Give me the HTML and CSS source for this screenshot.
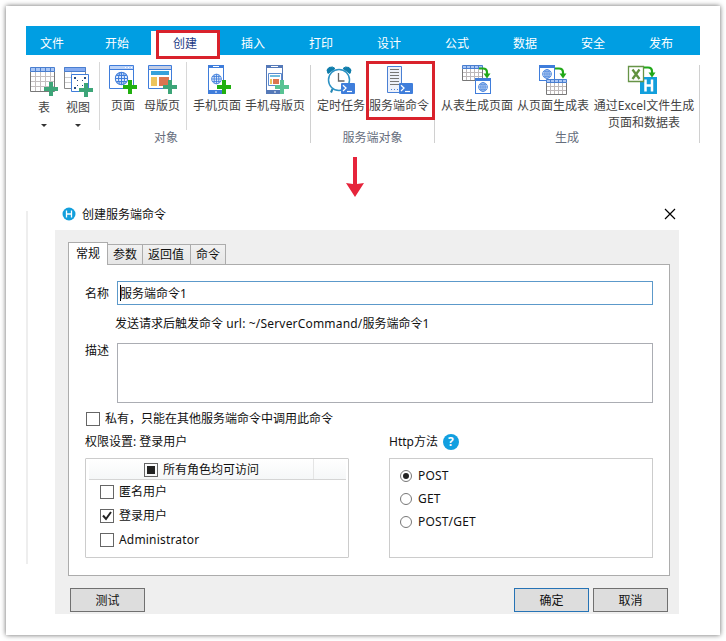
FILE: index.html
```html
<!DOCTYPE html>
<html lang="zh-CN">
<head>
<meta charset="utf-8">
<title>创建服务端命令</title>
<link rel="stylesheet" href="styles.css">
</head>
<body>
<svg class="defs" width="0" height="0">
  <defs>
    <symbol id="grid" viewBox="0 0 26 26">
      <rect x=".5" y=".5" width="24" height="24" fill="#fff"/>
      <path d="M5.5 5v19M10.5 5v19M15.5 5v19M20.5 5v19M1 9.5h23M1 14.500h23M1 19.500h23" stroke="#c4bfc0" fill="none"/>
      <rect x=".5" y=".5" width="24" height="4" fill="#a9c6f5"/>
      <path d="M.5 4.500v20h24v-20" stroke="#777" fill="none"/>
      <path d="M.5 4.500v-4h24v4zM5.500 1v3M10.500 1v3M15.500 1v3M20.500 1v3" stroke="#4a7fd0" fill="none"/>
    </symbol>
    <symbol id="minigrid" viewBox="0 0 21 16">
      <rect x=".5" y=".5" width="20" height="15" fill="#fff"/>
      <path d="M4.500 4v11M8.500 4v11M12.500 4v11M16.500 4v11M1 7.500h19M1 11.500h19" stroke="#bdb8b9" fill="none"/>
      <rect x=".5" y=".5" width="20" height="3" fill="#a9c6f5"/>
      <path d="M.5 3.500v12h20v-12" stroke="#777" fill="none"/>
      <path d="M.5 3.500v-3h20v3zM4.500 1v2M8.500 1v2M12.500 1v2M16.500 1v2" stroke="#4a7fd0" fill="none"/>
    </symbol>
    <symbol id="globe" viewBox="0 0 14 14">
      <g fill="#e6effb" stroke="#3f7ddb" stroke-width="1.100">
        <circle cx="7" cy="7" r="6.200"/><ellipse cx="7" cy="7" rx="3" ry="6.200"/>
        <path d="M7 .8v12.400M1 7h12M1.800 3.900h10.400M1.800 10.100h10.400"/>
      </g>
    </symbol>
    <symbol id="plus" viewBox="0 0 14 14"><path d="M5 0h4v5h5v4H9v5H5V9H0V5h5z"/></symbol>
    <symbol id="minipage" viewBox="0 0 16 16">
      <rect x=".5" y=".5" width="15" height="15" fill="#fff" stroke="#3f7ddb"/>
      <path d="M0 0h16v3H0z" fill="#3f7ddb"/>
      <use href="#globe" x="3" y="4" width="10" height="10"/>
    </symbol>
    <symbol id="turn" viewBox="0 0 12 12"><path d="M0 1.500h4q4 0 4 4v2" fill="none" stroke="#21a818" stroke-width="2.200"/><path d="M4.500 6.500h7L8 11.500z" fill="#21a818"/></symbol>
    <symbol id="shell" viewBox="0 0 14 11"><rect width="14" height="11" rx="1" fill="#3f7edb"/><path d="M2 2.200l3 2.900-3 2.900" fill="none" stroke="#fff" stroke-width="1.300"/><path d="M6 8.500h5" stroke="#fff" stroke-width="1.200"/></symbol>
  </defs>
</svg>
<main class="sheet">
  <section class="ribbon">
    <nav class="tabs">
      <span class="tab first">文件</span><span class="tab">开始</span><span class="tab active">创建<i class="mark mark-tab"></i></span><span class="tab">插入</span><span class="tab">打印</span><span class="tab">设计</span><span class="tab">公式</span><span class="tab">数据</span><span class="tab">安全</span><span class="tab">发布</span>
    </nav>
    <div class="groups">
      <div class="group objects">
        <div class="tools">
          <div class="set tables">
            <div class="tool w34 drop">
              <svg width="34" height="36" viewBox="27 62 34 36"><use href="#grid" x="30" y="67" width="26" height="26"/><use href="#plus" x="44" y="82" width="14" height="14" fill="#3da578"/></svg>
              <span>表</span><b></b>
            </div>
            <div class="tool w34 drop">
              <svg width="34" height="36" viewBox="61 62 34 36"><path d="M64.500 67.500h21v21h-21z" fill="#fff" stroke="#888"/><path d="M71.500 71v17M65 77.500h20M65 82.500h20" stroke="#ccc"/><path d="M64.500 67.500h21v4h-21z" fill="#86abf0" stroke="#4a7fd0"/><path d="M71.500 74.500h17v17h-17z" fill="#fff" stroke="#3f7ddb"/><path d="M74 77h2v2h-2zM84 77h2v2h-2zM74 87h2v2h-2zM77 80h1v1h-1zM82 80h1v1h-1zM77 85h1v1h-1zM82 85h1v1h-1z" fill="#244a82"/><use href="#plus" x="79" y="83" width="14" height="14" fill="#3da578"/></svg>
              <span>视图</span><b></b>
            </div>
          </div>
          <div class="set pages">
            <div class="tool w36">
              <svg width="36" height="36" viewBox="105 62 36 36"><path d="M109.500 65.500h24v23h-24z" fill="#fff" stroke="#3f7ddb"/><path d="M110 66h23v3h-23z" fill="#bdd3f7"/><path d="M109 69.500h25" stroke="#3f7ddb"/><path d="M125 67.500h1m2 0h1m2 0h1" stroke="#fff"/><use href="#globe" x="114.500" y="71.500" width="14" height="14"/><use href="#plus" x="123" y="80" width="14" height="14" fill="#21b010"/></svg>
              <span>页面</span>
            </div>
            <div class="tool w42">
              <svg width="42" height="36" viewBox="141 62 42 36"><path d="M148.500 65.500h23v23h-23z" fill="#fff" stroke="#3f7ddb"/><path d="M149 66h22v3h-22z" fill="#c5cee5"/><path d="M148 69.500h24" stroke="#3f7ddb"/><path d="M151 71h18v4h-18z" fill="#36a1da"/><path d="M151 77h6v9h-6z" fill="#edc45d"/><path d="M159 77h10v9h-10z" fill="#dc7550"/><use href="#plus" x="163" y="80" width="14" height="14" fill="#3da578"/></svg>
              <span>母版页</span>
            </div>
          </div>
          <div class="set phones">
            <div class="tool w48">
              <svg width="48" height="36" viewBox="193 62 48 36"><rect x="208.500" y="65.500" width="15" height="28" rx="1" fill="#fff" stroke="#3f7ddb"/><path d="M208 65h16v3h-16zM208 90h16v4h-16z" fill="#3f7ddb"/><path d="M213 66.500h6M215 92h2" stroke="#fff"/><use href="#globe" x="211" y="73.500" width="11" height="11"/><use href="#plus" x="217" y="80" width="14" height="14" fill="#21b010"/></svg>
              <span>手机页面</span>
            </div>
            <div class="tool w60">
              <svg width="60" height="36" viewBox="245 62 60 36"><rect x="266.500" y="65.500" width="16" height="28" rx="1" fill="#fff" stroke="#5579b8"/><path d="M266 65h17v3h-17zM266 90h17v4h-17z" fill="#5579b8"/><path d="M271 66.500h7M274 92h2" stroke="#fff"/><path d="M268.500 73.500h13v12h-13z" fill="#fff" stroke="#5b8bd0"/><path d="M270 75h10v2h-10z" fill="#70bde0"/><path d="M270 79h2v5h-2z" fill="#edc45d"/><path d="M273 79h6v5h-6z" fill="#dc7550"/><use href="#plus" x="275" y="80" width="14" height="14" fill="#58c393"/></svg>
              <span>手机母版页</span>
            </div>
          </div>
        </div>
        <div class="caption">对象</div>
      </div>
      <div class="group server">
        <div class="tools">
          <div class="tool w48">
            <svg width="48" height="36" viewBox="317 62 48 36"><path d="M328 73.500q-2.500-4 1-6 4-1.500 6 1zM350 73.500q2.500-4-1-6-4-1.500-6 1z" fill="#0f7dab" stroke="#0f7dab"/><path d="M332.500 89l-1.500 3.500" stroke="#2687b3" stroke-width="2"/><circle cx="339" cy="80" r="10.500" fill="#fff" stroke="#2d92c4" stroke-width="1.500"/><path d="M338.500 73v8h6" fill="none" stroke="#666" stroke-width="1.300"/><use href="#shell" x="341" y="83" width="14" height="11"/></svg>
            <span>定时任务</span>
          </div>
          <div class="tool w60 marked">
            <svg width="60" height="36" viewBox="369 62 60 36"><path d="M387.500 66.500h14v26h-14z" fill="#edf1fa" stroke="#4a80d4"/><path d="M390 69.500h9M390 72.500h9M390 75.500h9M390 78.500h9M390 81.500h9M390 84.500h9" stroke="#777"/><path d="M391 89.500h1m2 0h1m2 0h1" stroke="#4a80d4"/><use href="#shell" x="399" y="83" width="14" height="11"/></svg>
            <span>服务端命令</span><i class="mark mark-tool"></i>
          </div>
        </div>
        <div class="caption">服务端对象</div>
      </div>
      <div class="group build">
        <div class="tools">
          <div class="tool w72">
            <svg width="72" height="36" viewBox="441 62 72 36"><use href="#minigrid" x="462" y="65" width="21" height="16"/><use href="#minipage" x="475" y="78" width="16" height="16"/><use href="#turn" x="479" y="67" width="12" height="12"/></svg>
            <span>从表生成页面</span>
          </div>
          <div class="tool w72">
            <svg width="72" height="36" viewBox="517 62 72 36"><use href="#minipage" x="539" y="65" width="16" height="16"/><use href="#minigrid" x="546" y="79" width="21" height="16"/><use href="#turn" x="555" y="67" width="12" height="12"/></svg>
            <span>从页面生成表</span>
          </div>
          <div class="tool w102">
            <svg width="102" height="36" viewBox="593 62 102 36"><path d="M640 77h17v17h-17z" fill="#129fdc"/><path d="M645.500 79.500v12M652 79.500v12M645 85.500h7" stroke="#fff" stroke-width="2.500"/><path d="M628.500 66.500h15v15h-15z" fill="#fff" stroke="#679447" stroke-width="1.300"/><path d="M632.500 69.500l7 9.500M639.500 69.500l-7 9.500" stroke="#62923f" stroke-width="2.300"/><use href="#turn" x="644" y="66" width="12" height="12"/></svg>
            <span>通过Excel文件生成<br>页面和数据表</span>
          </div>
        </div>
        <div class="caption">生成</div>
      </div>
    </div>
  </section>

  <svg class="arrow" width="20" height="42" viewBox="0 0 20 42"><path d="M8 0h4v27l7-1-9 14L1 26l7 1z" fill="#e6243b"/></svg>

  <div class="stage">
    <div class="rule"></div>
    <section class="dialog">
      <header class="titlebar">
        <svg width="14" height="14" viewBox="0 0 14 14"><circle cx="7" cy="7" r="6.500" fill="#129fdc"/><path d="M4.500 3.500v7M9.500 3.500v7M5 7h4" stroke="#fff" stroke-width="1.300"/></svg>
        <h1>创建服务端命令</h1>
        <svg width="12" height="12" viewBox="0 0 12 12"><path d="M1 1l10 10M11 1L1 11" stroke="#000" stroke-width="1.200"/></svg>
      </header>
      <div class="client">
        <div class="pagetabs"><span class="current">常规</span><span>参数</span><span>返回值</span><span>命令</span></div>
        <div class="panel">
          <div class="field"><label>名称</label><div class="input"><i></i>服务端命令1</div></div>
          <p class="hint">发送请求后触发命令 <span class="latin">url: ~/ServerCommand/</span>服务端命令1</p>
          <div class="field"><label>描述</label><div class="area"></div></div>
          <div class="private"><i class="box"></i>私有，只能在其他服务端命令中调用此命令</div>
          <div class="columns">
            <div>
              <div class="heading">权限设置: 登录用户</div>
              <div class="roles">
                <div class="head"><div><i class="box mixed"></i>所有角色均可访问</div></div>
                <div class="role"><i class="box"></i>匿名用户</div>
                <div class="role"><i class="box"><svg width="12" height="12" viewBox="0 0 12 12"><path d="M2 5.500l3 3.500 5-7" fill="none" stroke="#222" stroke-width="2"/></svg></i>登录用户</div>
                <div class="role latin"><i class="box"></i>Administrator</div>
              </div>
            </div>
            <div>
              <div class="heading">Http方法<span class="help">?</span></div>
              <div class="methods latin">
                <div><i class="radio on"></i>POST</div>
                <div><i class="radio"></i>GET</div>
                <div><i class="radio"></i>POST/GET</div>
              </div>
            </div>
          </div>
        </div>
        <footer><span class="button">测试</span><span class="button ok">确定</span><span class="button">取消</span></footer>
      </div>
    </section>
  </div>
</main>
</body>
</html>
```
FILE: styles.css
```css
* { box-sizing: border-box; }
body {
  margin: 0;
  height: 641px;
  padding: 6px;
  overflow: hidden;
  background: #fff;
  font: 12px/16px "Noto Sans", "Noto Sans CJK SC", sans-serif;
  color: #111;
  white-space: nowrap;
}
i { font-style: normal; }
.defs { display: none; }
.latin { letter-spacing: .18px; }
.sheet {
  width: 714px;
  height: 629px;
  padding: 20px;
  background: #fff;
  box-shadow: 0 0 5px rgba(0, 0, 0, .6);
}
.mark { position: absolute; border: 3px solid #d9222c; }

.tabs { display: flex; height: 29px; background: #009ee2; }
.tab {
  width: 68px;
  padding-top: 10px;
  text-align: center;
  color: #fff;
}
.tab.first { width: 57px; padding-right: 5px; }
.tab.active {
  position: relative;
  margin-top: 5px;
  padding-top: 5px;
  background: #fff;
  color: #1f3c85;
}
.mark-tab { left: 5px; top: -1px; width: 64px; height: 29px; }

.groups { display: flex; height: 88px; color: #444; }
.group {
  display: flex;
  flex-direction: column;
  justify-content: space-between;
  border-right: 1px solid #d0d0d0;
  height: 78px;
  margin-top: 10px;
}
.objects { width: 285px; }
.server { width: 124px; }
.build { width: 265px; }
.tools { display: flex; height: 68px; margin-top: -3px; }
.group .caption { height: 13px; line-height: 15px; text-align: center; color: #666d7c; }
.objects .caption { padding-right: 4px; }
.set { display: flex; }
.tables { width: 74px; padding-left: 1px; border-right: 1px solid #d8d8d8; }
.pages { width: 87px; padding-left: 5px; border-right: 1px solid #d8d8d8; }
.phones { padding-left: 6px; gap: 4px; }
.server .tools { padding-left: 6px; gap: 4px; }
.build .tools { padding-left: 6px; gap: 4px; }
.tool { position: relative; display: flex; flex-direction: column; align-items: center; text-align: center; }
.tool svg { display: block; flex: none; }
.tool span { line-height: 17px; margin-top: -1px; }
.drop span { margin-top: 1px; }
.drop b { margin-top: 8px; border: 3px solid transparent; border-top-color: #333; border-bottom: 0; }
.w34 { width: 34px; }
.w36 { width: 36px; }
.w42 { width: 42px; }
.w48 { width: 48px; }
.w60 { width: 60px; }
.w72 { width: 72px; }
.w102 { width: 102px; }
.mark-tool { left: -3px; top: -1px; width: 69px; height: 59px; }

.arrow { display: block; margin: 14px 0 1px 319px; }
.stage { display: flex; }
.rule { width: 2px; height: 353px; margin: 11px 27px 0 0; background: #eee; }
.dialog { width: 624px; }
.titlebar { display: flex; align-items: center; height: 30px; padding: 0 3px 2px 7px; }
.titlebar h1 { flex: 1; margin: 2px 0 0 6px; font-size: 12px; font-weight: 400; }
.client { height: 384px; padding: 12px 9px 0 13px; background: #efefef; }
.pagetabs { display: flex; align-items: flex-end; height: 23px; margin-bottom: -1px; }
.pagetabs span {
  height: 21px;
  margin-left: -1px;
  padding: 2px 5px 0;
  border: 1px solid #acacac;
  background: linear-gradient(#f1f1f1, #e6e6e6);
}
.pagetabs span:nth-child(3) { width: 49px; }
.pagetabs .current {
  position: relative;
  width: 40px;
  height: 23px;
  margin: 0;
  padding: 3px 7px 0;
  background: #fff;
  border-bottom: 0;
}
.panel { width: 602px; height: 312px; padding: 16px 16px 0; border: 1px solid #acacac; background: #fff; }
.field { display: flex; }
.field label { width: 32px; }
.input {
  display: flex;
  align-items: center;
  width: 536px;
  height: 24px;
  padding: 2px 0 0 2px;
  border: 1px solid #5c99ca;
}
.field:first-child label { padding-top: 5px; }
.input i { width: 1px; height: 16px; background: #000; margin: -2px -1px 0 0; }
.hint { height: 38px; margin: 0; padding: 11px 0 0 30px; }
.area { width: 536px; height: 60px; border: 1px solid #abadb3; }
.private { display: flex; align-items: center; height: 31px; gap: 5px; padding-left: 1px; }
.box { display: block; flex: none; width: 14px; height: 14px; border: 1px solid #666; background: #fff; }
.box svg { display: block; }
.mixed { padding: 2px; background: #222 content-box; }
.columns { display: flex; gap: 40px; }
.heading { display: flex; align-items: center; height: 15px; margin-bottom: 9px; }
.help {
  width: 16px;
  height: 16px;
  margin-left: 5px;
  border-radius: 50%;
  background: #129fe0;
  color: #fff;
  font-weight: 700;
  text-align: center;
}
.roles, .methods { width: 264px; height: 100px; border: 1px solid #ccc; }
.roles { padding: 0 2px 0 3px; border-radius: 1px; }
.head { height: 21px; border-bottom: 1px solid #d5d5d5; background: linear-gradient(#fff, #f5f7f8); padding-right: 1px; }
.head div { display: flex; align-items: center; justify-content: center; gap: 5px; width: 225px; height: 20px; padding: 1px 0 0 1px; border-right: 1px solid #e5e5e5; }
.role { display: flex; align-items: center; gap: 5px; height: 24px; padding-left: 11px; }
.methods { padding: 5px 10px; }
.methods div { display: flex; align-items: center; gap: 6px; height: 23px; }
.radio { width: 12px; height: 12px; border: 1px solid #777; border-radius: 50%; }
.on { padding: 2px; background: #222 content-box; }
footer { display: flex; gap: 4px; margin-top: 12px; padding-left: 2px; }
.button { width: 75px; height: 24px; border: 1px solid #707070; background: #ddd; text-align: center; line-height: 24px; }
.ok { margin-left: 365px; border-color: #2673b5; }
```
